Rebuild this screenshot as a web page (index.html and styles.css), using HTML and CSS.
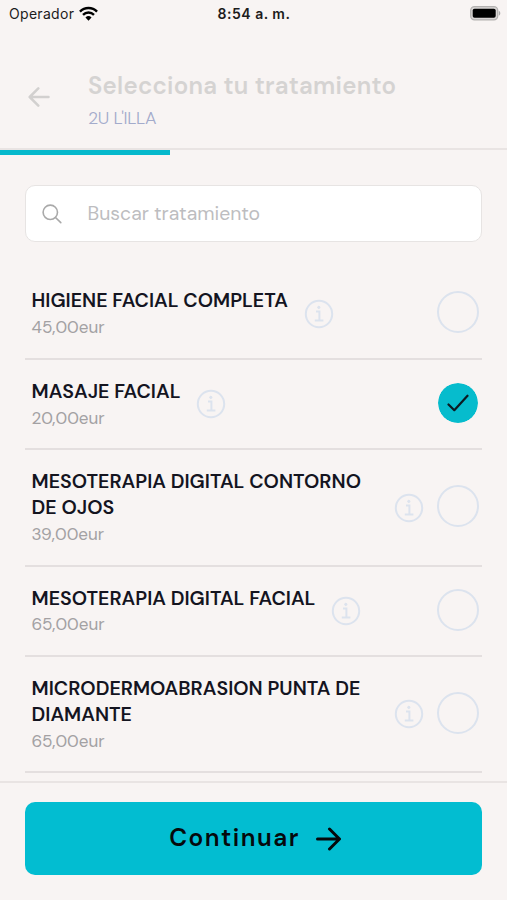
FILE: index.html
```html
<!DOCTYPE html>
<html lang="es">
<head>
  <meta charset="UTF-8" />
  <meta name="viewport" content="width=device-width, initial-scale=1" />
  <title>Selecciona tu tratamiento</title>
  <link rel="stylesheet" href="styles.css">
</head>
<body>
  <svg width="0" height="0" class="sprite">
    <symbol id="info" viewBox="0 0 30 30">
      <circle cx="15" cy="15" r="13.2" stroke-width="2" />
      <path d="M12 12.6h3.4v8.6M10.8 21.4h8.6" stroke-width="2" />
      <circle cx="14.8" cy="8.4" r="1.1" stroke-width="1" fill="currentColor" />
    </symbol>
  </svg>

  <div class="status-bar">
    <div class="carrier">
      <span>Operador</span>
      <svg class="wifi" viewBox="0 0 18 14" fill="none" stroke="#000" stroke-width="2.3">
        <path d="M.9 5.2a11.5 11.5 0 0 1 16.2 0" />
        <path d="M3.8 8.2a7.4 7.4 0 0 1 10.4 0" />
        <path d="M9 13.8 6.1 10.7a4.2 4.2 0 0 1 5.8 0z" fill="#000" stroke="none" />
      </svg>
    </div>
    <div class="time">8:54 a. m.</div>
    <svg class="battery" viewBox="0 0 31 15">
      <rect x=".7" y=".7" width="27" height="13.2" rx="3.8" fill="#d9d6d5" stroke="#b3b1b0" stroke-width="1.3" />
      <rect x="2.7" y="2.8" width="23" height="9" rx="1.8" />
      <path d="M28.8 4.8v5c2-.8 2-4.2 0-5z" fill="#aaa" />
    </svg>
  </div>

  <header class="header">
    <svg class="back" viewBox="0 0 22 20">
      <path d="M20.5 10H1.8M10.3 1.4 1.7 10l8.6 8.6" />
    </svg>
    <div>
      <h1>Selecciona tu tratamiento</h1>
      <p class="center-name">2U L'ILLA</p>
    </div>
  </header>
  <div class="progress"><div class="progress-bar"></div></div>

  <main>
    <label class="search">
      <svg viewBox="0 0 20 20">
        <circle cx="8.3" cy="8.3" r="7.2" />
        <path d="m13.5 13.5 5.3 5.1" />
      </svg>
      <input type="text" placeholder="Buscar tratamiento">
    </label>

    <ul class="treatments">
      <li class="treatment">
        <div class="text">
          <h2>HIGIENE FACIAL COMPLETA</h2>
          <p>45,00eur</p>
        </div>
        <svg class="info"><use href="#info" /></svg>
        <span class="check"></span>
      </li>
      <li class="treatment">
        <div class="text">
          <h2>MASAJE FACIAL</h2>
          <p>20,00eur</p>
        </div>
        <svg class="info"><use href="#info" /></svg>
        <span class="check selected">
          <svg viewBox="0 0 22 18"><path d="m1.5 10.5 5.8 5.7L20.5 1.7" /></svg>
        </span>
      </li>
      <li class="treatment">
        <div class="text wide">
          <h2>MESOTERAPIA DIGITAL CONTORNO<br>DE OJOS</h2>
          <p>39,00eur</p>
        </div>
        <svg class="info"><use href="#info" /></svg>
        <span class="check"></span>
      </li>
      <li class="treatment">
        <div class="text">
          <h2>MESOTERAPIA DIGITAL FACIAL</h2>
          <p>65,00eur</p>
        </div>
        <svg class="info"><use href="#info" /></svg>
        <span class="check"></span>
      </li>
      <li class="treatment">
        <div class="text wide">
          <h2>MICRODERMOABRASION PUNTA DE<br>DIAMANTE</h2>
          <p>65,00eur</p>
        </div>
        <svg class="info"><use href="#info" /></svg>
        <span class="check"></span>
      </li>
    </ul>
  </main>

  <footer>
    <button type="button" class="continue">
      <span>Continuar</span>
      <svg viewBox="0 0 25 24">
        <path d="M1.5 12h21.5M13.5 2l10 10-10 10" />
      </svg>
    </button>
  </footer>
</body>
</html>
```

FILE: styles.css
```css
* {
  box-sizing: border-box;
}

body {
  margin: 0;
  height: 900px;
  display: flex;
  flex-direction: column;
  overflow: hidden;
  background: #f8f4f3;
  color: #14141f;
  font-family: "DM Sans", Inter, sans-serif;
  font-variation-settings: "opsz" 14;
}

h1,
h2,
p,
ul {
  margin: 0;
  padding: 0;
}

.sprite {
  position: absolute;
}

.status-bar {
  display: grid;
  grid-template-columns: 1fr auto 1fr;
  align-items: center;
  height: 27px;
  padding: 0 8px 0 9px;
  font-family: Inter, sans-serif;
  font-size: 14px;
  color: #1c1c1c;
}

.carrier {
  display: flex;
  align-items: center;
  gap: 5px;
  letter-spacing: 0.3px;
}

.wifi {
  width: 19px;
  height: 15px;
  margin-top: -1px;
}

.time {
  font-weight: 600;
  letter-spacing: 0.5px;
}

.battery {
  width: 31px;
  height: 15px;
  margin-right: -2px;
  justify-self: end;
}

.header {
  display: flex;
  align-items: center;
  gap: 38px;
  height: 121px;
  padding: 27px 28px 0;
}

.back {
  width: 22px;
  height: 20px;
  margin-top: -9px;
  fill: none;
  stroke: #d2d0cf;
  stroke-width: 2.5;
  stroke-linecap: round;
  stroke-linejoin: round;
}

h1 {
  font-size: 24px;
  line-height: 34px;
  font-weight: 600;
  letter-spacing: 0.27px;
  color: #d5d3d2;
  white-space: nowrap;
}

.center-name {
  font-size: 17.7px;
  line-height: 30px;
  font-weight: 300;
  letter-spacing: -0.35px;
  color: #a3abcb;
}

.progress {
  height: 7px;
  border-top: 2px solid #e9e4e3;
}

.progress-bar {
  width: 170px;
  height: 5px;
  background: #06b9cc;
}

main {
  flex: 1;
  min-height: 0;
  padding: 30px 25px 0;
  overflow: hidden;
}

.search {
  display: flex;
  align-items: center;
  gap: 25.5px;
  height: 57px;
  padding: 0 17px 0 16px;
  border: 1.5px solid #e7e4e3;
  border-radius: 10px;
  background: #fff;
}

.search svg {
  width: 20px;
  height: 20px;
  fill: none;
  stroke: #a9a9a9;
  stroke-width: 1.6;
  stroke-linecap: round;
}

.search input {
  flex: 1;
  min-width: 0;
  padding: 0 0 1px;
  border: 0;
  outline: 0;
  background: none;
  font: 19.4px "DM Sans", Inter, sans-serif;
  font-variation-settings: "opsz" 14;
}

.search input::placeholder {
  color: #bdbdc0;
}

.treatments {
  margin-top: 27.4px;
  list-style: none;
}

.treatment {
  display: flex;
  align-items: center;
  padding: 19px 3px 17.6px 6.5px;
  border-bottom: 2px solid #e4dfdf;
}

h2 {
  font-size: 19.65px;
  line-height: 25.7px;
  font-weight: 600;
  white-space: nowrap;
}

.text p {
  font-size: 17.1px;
  line-height: 26.2px;
  color: #a3a1a3;
}

.wide {
  width: 346px;
}

.info {
  width: 30px;
  height: 30px;
  margin: -1px 0 0 16px;
  flex: none;
  color: #dce3ee;
  stroke: currentColor;
  fill: none;
}

.check {
  display: flex;
  align-items: center;
  justify-content: center;
  flex: none;
  width: 42px;
  height: 42px;
  margin: -4px 0 0 auto;
  border: 2px solid #dce3ee;
  border-radius: 50%;
}

.selected {
  border-color: #f8f4f3;
  border-width: 1.5px;
  background: #06bccd;
  background-clip: padding-box;
}

.selected svg {
  width: 22px;
  height: 18px;
  fill: none;
  stroke: #0c1a22;
  stroke-width: 2.2;
  stroke-linecap: round;
  stroke-linejoin: round;
}

footer {
  height: 119px;
  padding: 19px 25px 0;
  border-top: 2px solid #e9e4e3;
}

.continue {
  display: flex;
  align-items: center;
  justify-content: center;
  gap: 16px;
  width: 100%;
  height: 73px;
  padding: 0 0 0 3px;
  border: 0;
  border-radius: 10px;
  background: #02bdd1;
  color: #05090c;
  font: 600 24.4px "DM Sans", Inter, sans-serif;
  font-variation-settings: "opsz" 14;
  letter-spacing: 1.5px;
}

.continue span {
  margin-top: -2px;
}

.continue svg {
  width: 25px;
  height: 24px;
  fill: none;
  stroke: #05090c;
  stroke-width: 3;
  stroke-linecap: round;
  stroke-linejoin: round;
}
```
